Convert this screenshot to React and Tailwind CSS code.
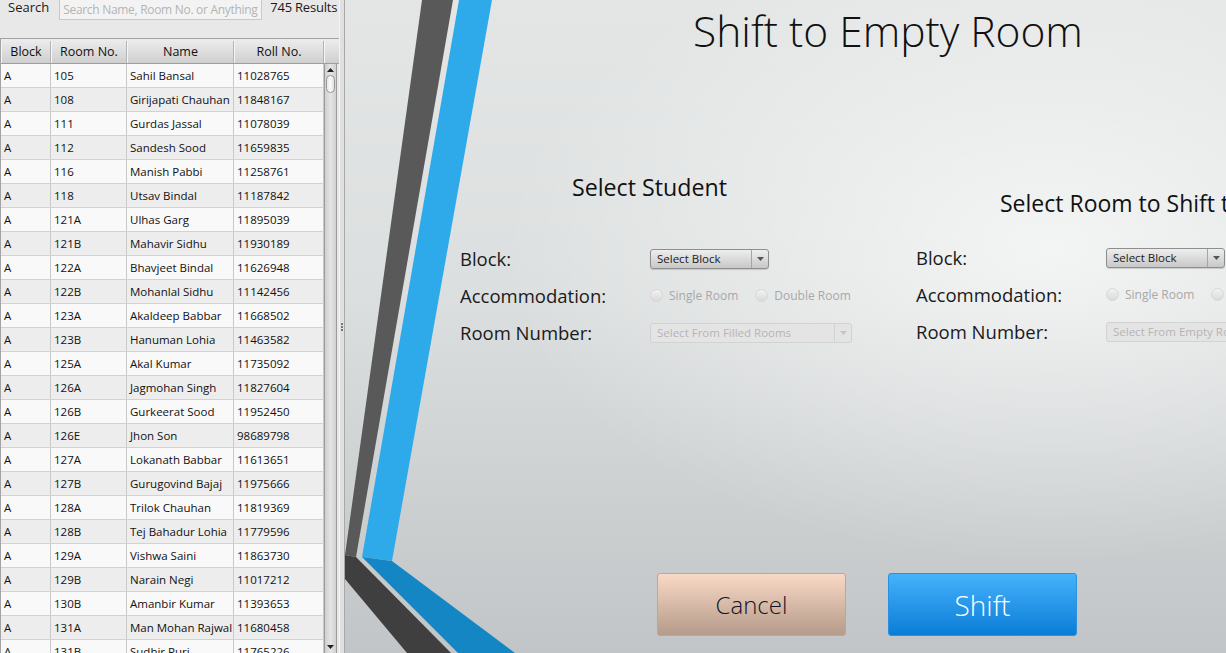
import clsx from 'clsx';

const ROWS = [
  ['A', '105', 'Sahil Bansal', '11028765'],
  ['A', '108', 'Girijapati Chauhan', '11848167'],
  ['A', '111', 'Gurdas Jassal', '11078039'],
  ['A', '112', 'Sandesh Sood', '11659835'],
  ['A', '116', 'Manish Pabbi', '11258761'],
  ['A', '118', 'Utsav Bindal', '11187842'],
  ['A', '121A', 'Ulhas Garg', '11895039'],
  ['A', '121B', 'Mahavir Sidhu', '11930189'],
  ['A', '122A', 'Bhavjeet Bindal', '11626948'],
  ['A', '122B', 'Mohanlal Sidhu', '11142456'],
  ['A', '123A', 'Akaldeep Babbar', '11668502'],
  ['A', '123B', 'Hanuman Lohia', '11463582'],
  ['A', '125A', 'Akal Kumar', '11735092'],
  ['A', '126A', 'Jagmohan Singh', '11827604'],
  ['A', '126B', 'Gurkeerat Sood', '11952450'],
  ['A', '126E', 'Jhon Son', '98689798'],
  ['A', '127A', 'Lokanath Babbar', '11613651'],
  ['A', '127B', 'Gurugovind Bajaj', '11975666'],
  ['A', '128A', 'Trilok Chauhan', '11819369'],
  ['A', '128B', 'Tej Bahadur Lohia', '11779596'],
  ['A', '129A', 'Vishwa Saini', '11863730'],
  ['A', '129B', 'Narain Negi', '11017212'],
  ['A', '130B', 'Amanbir Kumar', '11393653'],
  ['A', '131A', 'Man Mohan Rajwal', '11680458'],
  ['A', '131B', 'Sudhir Puri', '11765226'],
];

const COLS = 'grid grid-cols-[50px_76px_107px_90px]';

function Arrow({ up, color = '#333' }) {
  return (
    <svg width="7" height="4" viewBox="0 0 7 4">
      <polygon points={up ? '0,4 7,4 3.5,0' : '0,0 7,0 3.5,4'} fill={color} />
    </svg>
  );
}

function Combo({ label, className, disabled }) {
  return (
    <div
      className={clsx(
        'flex h-[20px] items-stretch overflow-hidden rounded-[3px] border text-[11.5px] leading-none',
        disabled
          ? 'border-[#d2d2d2] bg-[#e4e4e4] text-[#b5b5b5]'
          : 'border-[#8e8e8e] bg-[linear-gradient(#eeeeee,#c8c8c8)] text-[#1a1a1a] shadow-[0_1px_1px_rgba(0,0,0,0.15)]',
        className
      )}
    >
      <span className="flex flex-1 items-center whitespace-nowrap pl-[6px]">{label}</span>
      <span
        className={clsx(
          'flex w-[17px] shrink-0 items-center justify-center border-l',
          disabled ? 'border-[#d2d2d2]' : 'border-[#a5a5a5]'
        )}
      >
        <Arrow color={disabled ? '#c4c4c4' : '#555'} />
      </span>
    </div>
  );
}

function Radio({ label }) {
  return (
    <div className="flex items-center gap-[6px] whitespace-nowrap text-[12px] text-[#a8a8a8]">
      <span className="h-[13px] w-[13px] rounded-full border border-[#d6d6d6] bg-[linear-gradient(#f2f2f2,#dadada)]" />
      {label}
    </div>
  );
}

function Form({ placeholder }) {
  return (
    <div className="grid grid-cols-[190px_auto] text-[18.5px] text-[#1a1a1a]">
      <div className="flex h-[37px] items-center">Block:</div>
      <div className="flex h-[37px] items-center">
        <Combo label="Select Block" className="w-[119px]" />
      </div>
      <div className="flex h-[37px] items-center">Accommodation:</div>
      <div className="flex h-[37px] items-center gap-[17px]">
        <Radio label="Single Room" />
        <Radio label="Double Room" />
      </div>
      <div className="flex h-[37px] items-center">Room Number:</div>
      <div className="flex h-[37px] items-center">
        <Combo label={placeholder} className="w-[202px]" disabled />
      </div>
    </div>
  );
}

function Scrollbar() {
  return (
    <div className="flex w-[13px] flex-col border-x border-[#9c9c9c] bg-[linear-gradient(90deg,#d0d0d0,#e4e4e4,#d0d0d0)]">
      <div className="flex h-[11px] items-center justify-center">
        <Arrow up color="#222" />
      </div>
      <div className="mx-[1px] h-[18px] rounded-[5px] border border-[#9a9a9a] bg-[linear-gradient(90deg,#e8e8e8,#fafafa,#dcdcdc)]" />
      <div className="flex-1" />
      <div className="flex h-[12px] items-center justify-center">
        <Arrow color="#222" />
      </div>
    </div>
  );
}

function Stripes() {
  return (
    <svg className="absolute inset-0" width="881" height="653" viewBox="0 0 881 653">
      <polygon points="77,0 108,0 11,557 0,555" fill="#595959" />
      <polygon points="0,555 11,557 106,653 62,653 0,579" fill="#3f3f3f" />
      <polygon points="114,0 147,0 47,561 17,557" fill="#2eaaeb" />
      <polygon points="17,557 47,561 170,653 113,653" fill="#1486c4" />
    </svg>
  );
}

export default function App() {
  return (
    <div className="flex h-[653px] w-[1226px] overflow-hidden bg-[#e8e8e8] font-['Open_Sans',sans-serif]">
      {/* list of students */}
      <aside className="flex w-[339px] shrink-0 flex-col">
        <div className="flex h-[38px] items-start text-[13px] text-[#1a1a1a]">
          <span className="ml-[8px] mt-[-2px]">Search</span>
          <div className="ml-[10px] mt-[-1px] flex h-[21px] w-[203px] items-center overflow-hidden whitespace-nowrap border border-[#c9c9c9] bg-[#f3f3f3] pl-[3px] text-[12px] tracking-[-0.3px] text-[#b4b4b4]">
            Search Name, Room No. or Anything
          </div>
          <span className="ml-[8px] mt-[-2px] whitespace-nowrap tracking-[-0.2px]">745 Results</span>
        </div>
        <div className="flex min-h-0 flex-1 flex-col border-l border-t border-[#a3a3a3] text-[11.5px] text-[#111]">
          <div className="flex h-[25px] shrink-0 border-b border-[#9d9d9d] bg-[linear-gradient(#ededed,#cfcfcf)] pt-[2px] text-[12.5px]">
            <div className={COLS}>
              {['Block', 'Room No.', 'Name', 'Roll No.'].map((h) => (
                <div key={h} className="flex items-center justify-center border-r border-[#b3b3b3] border-l border-l-[#f5f5f5]">
                  {h}
                </div>
              ))}
            </div>
            <div className="flex-1 border-l border-[#f5f5f5]" />
          </div>
          <div className="flex min-h-0 flex-1 overflow-hidden">
            <div className="flex w-[323px] flex-col">
              {ROWS.map((r, i) => (
                <div
                  key={r[1]}
                  className={clsx(COLS, 'h-[24px] shrink-0 border-b border-[#d2d2d2]', i % 2 ? 'bg-[#ededed]' : 'bg-[#f9f9f9]')}
                >
                  {r.map((c, j) => (
                    <div key={j} className="flex items-center overflow-hidden whitespace-nowrap border-r border-[#c9c9c9] pl-[3px]">
                      {c}
                    </div>
                  ))}
                </div>
              ))}
            </div>
            <Scrollbar />
          </div>
        </div>
      </aside>

      {/* split handle */}
      <div className="flex w-[6px] shrink-0 flex-col items-center justify-center gap-[1px] border-l border-r border-l-[#f4f4f4] border-r-[#a8a8a8] bg-[#e0e0e0]">
        <span className="h-[2px] w-[2px] bg-[#777]" />
        <span className="h-[2px] w-[2px] bg-[#777]" />
        <span className="h-[2px] w-[2px] bg-[#777]" />
      </div>

      {/* shift form */}
      <main className="relative min-w-0 flex-1 overflow-hidden bg-[radial-gradient(ellipse_at_80%_38%,rgba(255,255,255,0.65),rgba(255,255,255,0)_55%),linear-gradient(180deg,#e4e6e6,#dcdfdf_45%,#c1c5c7)]">
        <Stripes />
        <div className="relative flex h-full w-[1086px] flex-col text-[#111]">
          <h1 className="pt-[6px] text-center text-[42.5px] font-light leading-[50px]">Shift to Empty Room</h1>
          <div className="flex pl-[115px]">
            <section className="w-[456px] shrink-0">
              <h2 className="ml-[112px] mt-[117px] h-[28px] whitespace-nowrap text-[23.2px] leading-[28px]">Select Student</h2>
              <div className="mt-[39px]">
                <Form placeholder="Select From Filled Rooms" />
              </div>
            </section>
            <section className="w-[456px] shrink-0">
              <h2 className="ml-[84px] mt-[133px] h-[28px] whitespace-nowrap text-[23px] leading-[28px]">Select Room to Shift to</h2>
              <div className="mt-[22px]">
                <Form placeholder="Select From Empty Rooms" />
              </div>
            </section>
          </div>
          <div className="mt-auto flex gap-[42px] pb-[17px] pl-[312px]">
            <button className="h-[63px] w-[189px] rounded-[3px] border border-[#c3a593] bg-[linear-gradient(#f8d9c5,#b59b8a)] text-[24px] font-light text-[#141428]">
              Cancel
            </button>
            <button className="h-[63px] w-[189px] rounded-[3px] border border-[#2a90e0] bg-[linear-gradient(#46b2fb,#0a7dd7)] text-[28px] font-light text-white">
              Shift
            </button>
          </div>
        </div>
      </main>
    </div>
  );
}
